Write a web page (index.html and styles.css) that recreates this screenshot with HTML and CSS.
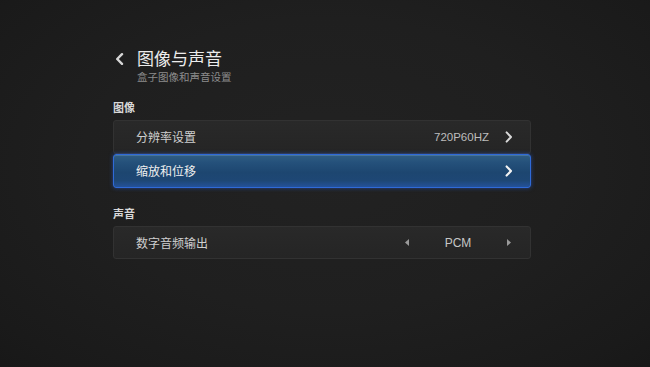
FILE: index.html
```html
<!DOCTYPE html>
<html lang="zh-CN">
<head>
<meta charset="utf-8">
<title>图像与声音</title>
<link rel="stylesheet" href="styles.css">
</head>
<body>
<div class="screen">
  <div class="panel">
    <header class="header">
      <svg class="back" width="9" height="12" viewBox="0 0 9 12"><path d="M7 1.2 L2.2 6 L7 10.8" fill="none" stroke="#d6d6d6" stroke-width="2.4" stroke-linecap="round" stroke-linejoin="round"/></svg>
      <div class="titles">
        <div class="title">图像与声音</div>
        <div class="subtitle">盒子图像和声音设置</div>
      </div>
    </header>

    <div class="section-label">图像</div>
    <div class="row">
      <span class="label">分辨率设置</span>
      <span class="value">720P60HZ</span>
      <svg class="chev" width="8" height="12" viewBox="0 0 8 12"><path d="M1.6 1.4 L6 6 L1.6 10.6" fill="none" stroke="#d8d8d8" stroke-width="2" stroke-linecap="round" stroke-linejoin="round"/></svg>
    </div>
    <div class="row focused">
      <span class="label">缩放和位移</span>
      <svg class="chev" width="8" height="12" viewBox="0 0 8 12"><path d="M1.6 1.4 L6 6 L1.6 10.6" fill="none" stroke="#f2f2f2" stroke-width="2.1" stroke-linecap="round" stroke-linejoin="round"/></svg>
    </div>

    <div class="section-label sound">声音</div>
    <div class="row short">
      <span class="label">数字音频输出</span>
      <div class="picker">
        <svg class="tri" width="4" height="7" viewBox="0 0 4 7"><path d="M4 0 L0 3.5 L4 7 Z" fill="#9a9a9a"/></svg>
        <span class="pick-value">PCM</span>
        <svg class="tri" width="4" height="7" viewBox="0 0 4 7"><path d="M0 0 L4 3.5 L0 7 Z" fill="#9a9a9a"/></svg>
      </div>
    </div>
  </div>
</div>
</body>
</html>
```

FILE: styles.css
```css
* { box-sizing: border-box; }
html, body {
  margin: 0;
  padding: 0;
  width: 650px;
  height: 367px;
  overflow: hidden;
}
body {
  background: #1b1b1b;
  font-family: "Noto Sans CJK SC", "Liberation Sans", sans-serif;
  color: #d2d2d2;
}
.screen {
  width: 650px;
  height: 367px;
  background: radial-gradient(ellipse 75% 80% at 50% 45%, #222222 0%, #1f1f1f 50%, #1a1a1a 85%, #171717 100%);
  padding-top: 48px;
}
.panel {
  margin-left: 113px;
  width: 418px;
  display: flex;
  flex-direction: column;
}
.header {
  display: flex;
  align-items: flex-start;
  padding-left: 2px;
}
.back {
  margin-top: 5px;
  flex: none;
}
.titles {
  margin-left: 13px;
  display: flex;
  flex-direction: column;
}
.title {
  font-size: 17px;
  line-height: 19px;
  color: #ececec;
}
.subtitle {
  margin-top: 3px;
  font-size: 10.5px;
  line-height: 13px;
  color: #8c8c8c;
}
.section-label {
  margin-top: 18px;
  font-size: 11px;
  line-height: 13px;
  color: #d8d8d8;
  font-weight: 700;
}
.section-label.sound {
  margin-top: 19px;
}
.section-label + .row { margin-top: 6px; }
.row {
  height: 34px;
  display: flex;
  align-items: center;
  padding: 0 17px 0 22px;
  background: linear-gradient(to bottom, #292929, #252525);
  border: 1px solid #323232;
  border-radius: 3px;
}
.row.short { height: 33px; padding-right: 19px; }
.label {
  flex: 1;
  font-size: 12px;
  line-height: 14px;
  color: #cfcfcf;
}
.value {
  font-family: "Liberation Sans", sans-serif;
  font-size: 11.5px;
  color: #bdbdbd;
  margin-right: 16px;
}
.chev { flex: none; }
.row.focused {
  background: linear-gradient(to bottom, #305d83 0%, #24507a 25%, #1d4670 55%, #1e4775 80%, #24529a 100%);
  border: 1px solid #2f6ad8;
  box-shadow: 0 0 4px rgba(40, 100, 230, 0.55), inset 0 1px 0 rgba(140, 190, 230, 0.25);
}
.row.focused .label {
  color: #f0f0f0;
}
.picker {
  display: flex;
  align-items: center;
}
.pick-value {
  width: 98px;
  text-align: center;
  font-family: "Liberation Sans", sans-serif;
  font-size: 12px;
  color: #c6c6c6;
}
.tri { flex: none; }
```
